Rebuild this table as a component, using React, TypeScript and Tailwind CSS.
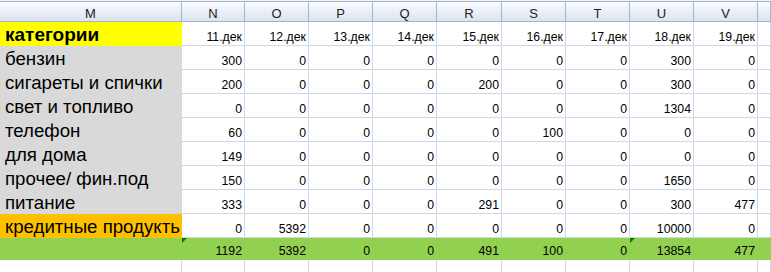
import React from "react";

const cols = ["M", "N", "O", "P", "Q", "R", "S", "T", "U", "V", ""];
const widths = "grid-cols-[182px_63px_64px_64px_64px_65px_64px_64px_64px_64px_1fr]";

const dates = ["11.дек", "12.дек", "13.дек", "14.дек", "15.дек", "16.дек", "17.дек", "18.дек", "19.дек"];

type Row = { label: string; fill: string; values: number[] };

const rows: Row[] = [
  { label: "бензин", fill: "bg-[#d9d9d9] border-[#d9d9d9]", values: [300, 0, 0, 0, 0, 0, 0, 300, 0] },
  { label: "сигареты и спички", fill: "bg-[#d9d9d9] border-[#d9d9d9]", values: [200, 0, 0, 0, 200, 0, 0, 300, 0] },
  { label: "свет и топливо", fill: "bg-[#d9d9d9] border-[#d9d9d9]", values: [0, 0, 0, 0, 0, 0, 0, 1304, 0] },
  { label: "телефон", fill: "bg-[#d9d9d9] border-[#d9d9d9]", values: [60, 0, 0, 0, 0, 100, 0, 0, 0] },
  { label: "для дома", fill: "bg-[#d9d9d9] border-[#d9d9d9]", values: [149, 0, 0, 0, 0, 0, 0, 0, 0] },
  { label: "прочее/ фин.под", fill: "bg-[#d9d9d9] border-[#d9d9d9]", values: [150, 0, 0, 0, 0, 0, 0, 1650, 0] },
  { label: "питание", fill: "bg-[#d9d9d9] border-[#d9d9d9]", values: [333, 0, 0, 0, 291, 0, 0, 300, 477] },
  { label: "кредитные продукть", fill: "bg-[#ffc000] border-[#ffc000]", values: [0, 5392, 0, 0, 0, 0, 0, 10000, 0] },
];

const totals = [1192, 5392, 0, 0, 491, 100, 0, 13854, 477];

const Num = ({ children }: { children: React.ReactNode }) => (
  <div className="flex h-6 items-end justify-end overflow-hidden border-b border-r border-[#d0d7e5] pb-[1px] pr-[2px] text-[12.3px] leading-[14px]">
    {children}
  </div>
);

export default function App() {
  return (
    <div className="h-[272px] w-[771px] overflow-hidden bg-white text-black" style={{ fontFamily: '"Liberation Sans", Arial, sans-serif' }}>
      <div className="h-px bg-[#eef2f7]" />
      <div className={`grid ${widths} h-[21px] border-t border-b border-[#9eb6ce]`}>
        {cols.map((c, i) => (
          <div
            key={i}
            className="flex items-center justify-center border-r border-[#9eb6ce] bg-gradient-to-b from-[#f9fbfd] to-[#dce4ef] pt-[3px] text-[13px] leading-none text-[#222]"
          >
            {c}
          </div>
        ))}
      </div>

      <div className={`grid ${widths}`}>
        <div className="flex h-6 items-end overflow-hidden whitespace-nowrap border-b border-r border-[#ffff00] bg-[#ffff00] pl-[5px] text-[19px] font-bold leading-[20px]">
          категории
        </div>
        {dates.map(d => (
          <Num key={d}>{d}</Num>
        ))}
        <Num>{""}</Num>

        {rows.map(r => (
          <React.Fragment key={r.label}>
            <div className={`flex h-6 items-end overflow-hidden whitespace-nowrap border-b border-r pl-[5px] text-[18.67px] leading-[20px] ${r.fill}`}>
              {r.label}
            </div>
            {r.values.map((v, i) => (
              <Num key={i}>{v}</Num>
            ))}
            <Num>{""}</Num>
          </React.Fragment>
        ))}

        {/* total row */}
        <div className="col-span-11 grid h-[22px] grid-cols-subgrid bg-[#92d050]">
          <div />
          {totals.map((v, i) => (
            <div key={i} className="relative flex items-end justify-end pb-[2px] pr-[3px] text-[12.3px] leading-[14px]">
              {(i === 0 || i === 7) && (
                <span className="absolute left-0 top-0 h-0 w-0 border-r-[5px] border-t-[5px] border-r-transparent border-t-[#008000]" />
              )}
              {v}
            </div>
          ))}
          <div />
        </div>

        {cols.map((c, i) => (
          <div key={i} className="h-3 border-r border-[#d0d7e5]" />
        ))}
      </div>
    </div>
  );
}
